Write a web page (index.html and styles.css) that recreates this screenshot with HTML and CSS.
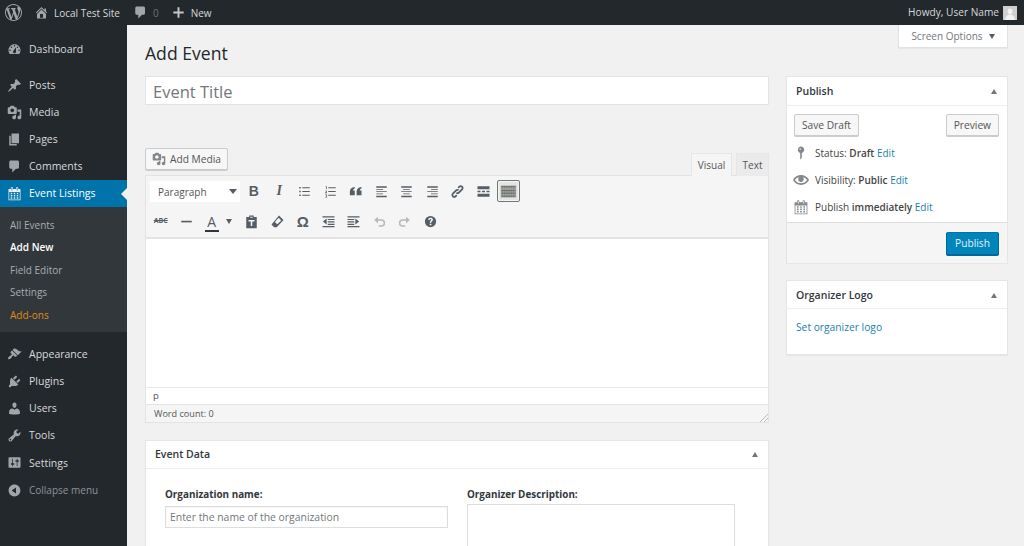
FILE: index.html
```html
<!DOCTYPE html>
<html lang="en">
<head>
<meta charset="utf-8">
<title>Add Event</title>
<link rel="stylesheet" href="styles.css">
</head>
<body>
<svg class="defs" xmlns="http://www.w3.org/2000/svg">
<symbol id="i-wp" viewBox="0 0 20 20"><path d="M20 10c0-5.51-4.49-10-10-10C4.48 0 0 4.49 0 10c0 5.52 4.48 10 10 10 5.51 0 10-4.48 10-10zM7.78 15.37L4.37 6.22c.55-.02 1.17-.08 1.17-.08.5-.06.44-1.13-.06-1.11 0 0-1.45.11-2.37.11-.18 0-.37 0-.58-.01C4.12 2.69 6.87 1.11 10 1.11c2.33 0 4.45.87 6.05 2.34-.68-.11-1.65.39-1.65 1.58 0 .74.45 1.36.9 2.1.35.61.55 1.36.55 2.46 0 1.49-1.4 5-1.4 5l-3.03-8.37c.54-.02.82-.17.82-.17.5-.05.44-1.25-.06-1.22 0 0-1.44.12-2.38.12-.87 0-2.33-.12-2.33-.12-.5-.03-.56 1.2-.06 1.22l.92.08 1.26 3.41zM17.41 10c.24-.64.74-1.87.43-4.25.7 1.29 1.05 2.71 1.05 4.25 0 3.29-1.73 6.24-4.4 7.78.97-2.59 1.94-5.2 2.92-7.78zM6.1 18.09C3.12 16.65 1.11 13.53 1.11 10c0-1.3.23-2.48.72-3.59C3.25 10.3 4.67 14.2 6.1 18.09zm4.03-6.63l2.58 6.98c-.86.29-1.76.45-2.71.45-.79 0-1.57-.11-2.29-.33.81-2.38 1.62-4.74 2.42-7.1z"/></symbol>
<symbol id="i-home" viewBox="0 0 20 20"><path d="M16 8.5l1.53 1.53-1.06 1.06L10 4.62l-6.47 6.47-1.06-1.06L10 2.5l4 4v-2h2v4zm-6-2.46l6 5.99V18H4v-5.97zM12 17v-5H8v5h4z"/></symbol>
<symbol id="i-comment" viewBox="0 0 20 20"><path d="M5 2h9c1.1 0 2 .9 2 2v7c0 1.1-.9 2-2 2h-2l-5 5v-5H5c-1.1 0-2-.9-2-2V4c0-1.1.9-2 2-2z"/></symbol>
<symbol id="i-plus" viewBox="0 0 20 20"><path d="M18 8.5v3h-6.5V18h-3v-6.5H2v-3h6.5V2h3v6.5z"/></symbol>
<symbol id="i-dash" viewBox="0 0 20 20"><path fill-rule="evenodd" d="M3.76 16h12.48c1.1-1.37 1.76-3.11 1.76-5 0-4.42-3.58-8-8-8s-8 3.58-8 8c0 1.89.66 3.63 1.76 5zM10 4c.55 0 1 .45 1 1s-.45 1-1 1-1-.45-1-1 .45-1 1-1zM6 6c.55 0 1 .45 1 1s-.45 1-1 1-1-.45-1-1 .45-1 1-1zm8 0c.55 0 1 .45 1 1s-.45 1-1 1-1-.45-1-1 .45-1 1-1zm-5.37 5.55L12 7v6c0 1.1-.9 2-2 2s-2-.9-2-2c0-.57.24-1.08.63-1.45zM4 10c.55 0 1 .45 1 1s-.45 1-1 1-1-.45-1-1 .45-1 1-1zm12 0c.55 0 1 .45 1 1s-.45 1-1 1-1-.45-1-1 .45-1 1-1z"/></symbol>
<symbol id="i-pin" viewBox="0 0 20 20"><path d="M10.44 3.02l1.82-1.82 6.36 6.35-1.83 1.82c-1.05-.68-2.48-.57-3.41.36l-.75.75c-.92.93-1.04 2.35-.35 3.41l-1.83 1.82-2.41-2.41-2.8 2.79c-.42.42-3.38 2.71-3.8 2.29s1.86-3.39 2.28-3.81l2.79-2.79L4.1 9.36l1.83-1.82c1.05.69 2.48.57 3.4-.36l.75-.75c.93-.92 1.05-2.35.36-3.41z"/></symbol>
<symbol id="i-media" viewBox="0 0 20 20"><path fill-rule="evenodd" d="M13 11V4c0-.55-.45-1-1-1h-1.67L9 1H5L3.67 3H2c-.55 0-1 .45-1 1v7c0 .55.45 1 1 1h10c.55 0 1-.45 1-1zM7 4.5c1.38 0 2.5 1.12 2.5 2.5S8.38 9.5 7 9.5 4.5 8.38 4.5 7 5.62 4.5 7 4.5zM14 6h5v10.5c0 1.38-1.12 2.5-2.5 2.5S14 17.88 14 16.5s1.12-2.5 2.5-2.5c.17 0 .34.02.5.05V9h-3V6zm-4 8.05V13h2v3.5c0 1.38-1.12 2.5-2.5 2.5S7 17.88 7 16.5 8.12 14 9.5 14c.17 0 .34.02.5.05z"/></symbol>
<symbol id="i-page" viewBox="0 0 20 20"><path d="M6 15V2h10v13H6zm-1 1h8v2H3V5h2v11z"/></symbol>
<symbol id="i-cal" viewBox="0 0 20 20"><path fill-rule="evenodd" d="M15 4h3v15H2V4h3V3c0-.41.15-.76.44-1.06.29-.29.65-.44 1.06-.44s.77.15 1.06.44c.29.3.44.65.44 1.06v1h4V3c0-.41.15-.76.44-1.06.29-.29.65-.44 1.06-.44s.77.15 1.06.44c.29.3.44.65.44 1.06v1zM6 3v2.5c0 .14.05.26.15.36.09.09.21.14.35.14s.26-.05.35-.14c.1-.1.15-.22.15-.36V3c0-.14-.05-.26-.15-.35-.09-.1-.21-.15-.35-.15s-.26.05-.35.15c-.1.09-.15.21-.15.35zm7 0v2.5c0 .14.05.26.14.36.1.09.22.14.36.14s.26-.05.36-.14c.09-.1.14-.22.14-.36V3c0-.14-.05-.26-.14-.35-.1-.1-.22-.15-.36-.15s-.26.05-.36.15c-.09.09-.14.21-.14.35zm4 15V8H3v10h14zM7 9v2H5V9h2zm2 0h2v2H9V9zm4 2V9h2v2h-2zm-6 1v2H5v-2h2zm2 0h2v2H9v-2zm4 2v-2h2v2h-2zm-6 1v2H5v-2h2zm4 2H9v-2h2v2zm4 0h-2v-2h2v2z"/></symbol>
<symbol id="i-brush" viewBox="0 0 20 20"><path d="M14.48 11.06L7.41 3.99l1.5-1.5c.5-.56 2.3-.47 3.51.32 1.21.8 1.43 1.28 2.91 2.1 1.18.64 2.45 1.26 4.45.85zm-.71.71L6.7 4.7 4.93 6.47c-.39.39-.39 1.02 0 1.41l1.06 1.06c.39.39.39 1.03 0 1.42-.6.6-1.43 1.11-2.21 1.69-.35.26-.7.53-1.01.84C1.43 13.71.96 15.12 1.75 15.91c.8.79 2.2.32 3.43-.91.31-.31.58-.66.84-1.01.58-.78 1.09-1.61 1.69-2.21.39-.39 1.03-.39 1.42 0l1.06 1.06c.39.39 1.02.39 1.41 0z"/></symbol>
<symbol id="i-plug" viewBox="0 0 20 20"><path d="M13.11 4.36L9.87 7.6 8 5.73l3.24-3.24c.35-.34 1.05-.2 1.56.32.52.51.66 1.21.31 1.55zm-8 1.77l.91-1.12 9.01 9.01-1.19.84c-.71.71-2.63 1.16-3.82 1.16H6.14L4.9 17.26c-.59.59-1.54.59-2.12 0-.59-.58-.59-1.53 0-2.12l1.24-1.24v-3.88c0-1.13.4-3.19 1.09-3.89zm7.26 3.97l3.24-3.24c.34-.35 1.04-.21 1.55.31.52.51.66 1.21.31 1.55l-3.24 3.25z"/></symbol>
<symbol id="i-users" viewBox="0 0 20 20"><path d="M10 9.25c-2.27 0-2.73-3.44-2.73-3.44C7 4.02 7.82 2 9.97 2c2.16 0 2.98 2.02 2.71 3.81 0 0-.41 3.44-2.68 3.44zm0 2.57L12.72 10c2.39 0 4.52 2.33 4.52 4.53v2.49s-3.65 1.13-7.24 1.13c-3.65 0-7.24-1.13-7.24-1.13v-2.49c0-2.25 1.94-4.48 4.47-4.48z"/></symbol>
<symbol id="i-tools" viewBox="0 0 20 20"><path fill-rule="evenodd" d="M16.68 9.77c-1.34 1.34-3.3 1.67-4.95.99l-5.41 6.52c-.99.99-2.59.99-3.58 0s-.99-2.59 0-3.57l6.52-5.42c-.68-1.65-.35-3.61.99-4.95 1.28-1.28 3.12-1.62 4.72-1.06l-2.89 2.89 2.82 2.82 2.86-2.87c.53 1.58.18 3.39-1.08 4.65zM3.81 16.21c.4.39 1.04.39 1.43 0 .4-.4.4-1.04 0-1.43-.39-.4-1.03-.4-1.43 0-.39.39-.39 1.03 0 1.43z"/></symbol>
<symbol id="i-set" viewBox="0 0 20 20"><path fill-rule="evenodd" d="M18 16V4c0-.55-.45-1-1-1H3c-.55 0-1 .45-1 1v12c0 .55.45 1 1 1h14c.55 0 1-.45 1-1zM8 11h1c.55 0 1 .45 1 1s-.45 1-1 1H8v1.5c0 .28-.22.5-.5.5s-.5-.22-.5-.5V13H6c-.55 0-1-.45-1-1s.45-1 1-1h1V5.5c0-.28.22-.5.5-.5s.5.22.5.5V11zm5-2h-1c-.55 0-1-.45-1-1s.45-1 1-1h1V5.5c0-.28.22-.5.5-.5s.5.22.5.5V7h1c.55 0 1 .45 1 1s-.45 1-1 1h-1v5.5c0 .28-.22.5-.5.5s-.5-.22-.5-.5V9z"/></symbol>
<symbol id="i-collapse" viewBox="0 0 20 20"><path fill-rule="evenodd" d="M10 2.16c4.33 0 7.84 3.51 7.84 7.84s-3.51 7.84-7.84 7.84S2.16 14.33 2.16 10 5.71 2.16 10 2.16zm2 11.72V6.12L6.18 9.97z"/></symbol>
<symbol id="i-status" viewBox="0 0 20 20"><path fill-rule="evenodd" d="M14 6c0 1.86-1.28 3.41-3 3.86V16c0 1-2 2-2 2V9.86c-1.72-.45-3-2-3-3.86 0-2.21 1.79-4 4-4s4 1.79 4 4zM8 5c0 .55.45 1 1 1s1-.45 1-1-.45-1-1-1-1 .45-1 1z"/></symbol>
<symbol id="i-eye" viewBox="0 0 20 20"><path d="M19.7 9.4C17.7 6 14 3.9 10 3.9S2.3 6 .3 9.4L0 10l.3.6c2 3.4 5.7 5.5 9.7 5.5s7.7-2.1 9.7-5.5l.3-.6-.3-.6zM10 14.1c-3.1 0-6-1.6-7.7-4.1C3.6 8 5.7 6.6 8 6.1c-.9.6-1.5 1.7-1.5 2.9 0 1.9 1.6 3.5 3.5 3.5s3.5-1.6 3.5-3.5c0-1.2-.6-2.3-1.5-2.9 2.3.5 4.4 1.9 5.7 3.9-1.7 2.5-4.6 4.1-7.7 4.1z"/></symbol>
<symbol id="m-ul" viewBox="0 0 20 20"><path d="M3 4h2v2H3zM3 9h2v2H3zM3 14h2v2H3zM7 4.4h10v1.2H7zM7 9.4h10v1.2H7zM7 14.4h10v1.2H7z"/></symbol>
<symbol id="m-ol" viewBox="0 0 20 20"><path d="M4 3h1v4H4V4H3zM3 9h2.2v1.6L4 11.4h1.4v.8H3v-1.1l1.3-.9V9.8H3zM3 14h2.4v4H3v-.7h1.5v-.9H3.4v-.7h1.1v-.9H3zM7 4.4h10v1.2H7zM7 9.4h10v1.2H7zM7 14.4h10v1.2H7z"/></symbol>
<symbol id="m-quote" viewBox="0 0 20 20"><path d="M9 4v2C7.4 6.5 6.8 7.4 6.7 8.8H9V15H2.5V10C2.5 7 4.5 4.3 9 4zM18 4v2c-1.600.5-2.200 1.400-2.300 2.800H18V15h-6.500V10c0-3 2-5.700 6.500-6z"/></symbol>
<symbol id="m-left" viewBox="0 0 20 20"><path d="M3 3h14v2H3zM3 6.500h9v1.200H3zM3 9.500h14v1.200H3zM3 12.500h9v1.200H3zM3 15.500h14v2H3z"/></symbol>
<symbol id="m-center" viewBox="0 0 20 20"><path d="M3 3h14v2H3zM5.500 6.500h9v1.200h-9zM3 9.500h14v1.200H3zM5.500 12.500h9v1.200h-9zM3 15.500h14v2H3z"/></symbol>
<symbol id="m-right" viewBox="0 0 20 20"><path d="M3 3h14v2H3zM8 6.500h9v1.200H8zM3 9.500h14v1.200H3zM8 12.500h9v1.200H8zM3 15.500h14v2H3z"/></symbol>
<symbol id="m-link" viewBox="0 0 20 20"><path fill="none" stroke="currentColor" stroke-width="2.400" d="M8.600 11.400c1 1 2.200.9 3.200 0l4.300-4.300c1-1 1-2.600 0-3.500s-2.500-1-3.500 0l-1.600 1.600M11.400 8.600c-1-1-2.200-.9-3.200 0l-4.300 4.300c-1 1-1 2.600 0 3.500s2.500 1 3.500 0l1.600-1.600"/></symbol>
<symbol id="m-more" viewBox="0 0 20 20"><path d="M2 3h16v4H2zM2 9h4v2H2zM8 9h4v2H8zM14 9h4v2h-4zM2 13h16v4H2z"/></symbol>
<symbol id="m-sink" viewBox="0 0 20 20"><path d="M1 3h18v14H1z" fill="#9b9f95"/><path d="M2 4.500h16M2 9h16M2 12h16M2 15.500h16" stroke="#40464d" stroke-width="1" stroke-dasharray="1.500 .7" fill="none"/></symbol>
<symbol id="m-hr" viewBox="0 0 20 20"><path d="M3 9h14v2.200H3z"/></symbol>
<symbol id="m-paste" viewBox="0 0 20 20"><path fill-rule="evenodd" d="M7 2h6v2h4v15H3V4h4zM8.500 3.500v1.500h3V3.500zM6 8v2h8V8zm3 2v6h2v-6z"/></symbol>
<symbol id="m-erase" viewBox="0 0 20 20"><path fill-rule="evenodd" d="M12 2l6 6-9 9.500H5.500L2 14zM11.500 5L6.500 10.500l3.200 3.200 5.300-5.200z"/></symbol>
<symbol id="m-outdent" viewBox="0 0 20 20"><path d="M2 3h16v1.500H2zM9 6.500h9V8H9zM9 9.800h9v1.400H9zM9 13h9v1.500H9zM2 16h16v1.500H2zM7.500 6v8L2.500 10z"/></symbol>
<symbol id="m-indent" viewBox="0 0 20 20"><path d="M2 3h16v1.500H2zM2 6.500h9V8H2zM2 9.800h9v1.400H2zM2 13h9v1.500H2zM2 16h16v1.500H2zM12.500 6v8l5-4z"/></symbol>
<symbol id="m-undo" viewBox="0 0 20 20"><path fill="none" stroke="currentColor" stroke-width="2" d="M6 8h6.500a3.800 3.800 0 0 1 0 8H9"/><path d="M3 8l5-4.500v9z"/></symbol>
<symbol id="m-redo" viewBox="0 0 20 20"><path fill="none" stroke="currentColor" stroke-width="2" d="M14 8H7.500a3.800 3.800 0 0 0 0 8H11"/><path d="M17 8l-5-4.500v9z"/></symbol>
<symbol id="m-help" viewBox="0 0 20 20"><path fill-rule="evenodd" d="M10 2.500a7.500 7.500 0 1 1 0 15 7.500 7.500 0 0 1 0-15zM9 13v2h2.200v-2zM7 8h2c0-.8.400-1.200 1-1.200s1 .4 1 1c0 1.100-2 1.400-2 3.800h2c0-1.700 2.200-2 2.200-4 0-1.700-1.400-2.600-3.200-2.600C8.200 5 7 6.200 7 8z"/></symbol>
</svg>

<header class="adminbar">
  <a class="ab-logo"><svg class="ab-wp"><use href="#i-wp"/></svg></a>
  <a class="ab-item ab-site"><svg class="ab-ic"><use href="#i-home"/></svg>Local Test Site</a>
  <a class="ab-item ab-comments"><svg class="ab-ic"><use href="#i-comment"/></svg><span class="ab-count">0</span></a>
  <a class="ab-item ab-new"><svg class="ab-ic"><use href="#i-plus"/></svg>New</a>
  <a class="ab-item ab-user">Howdy, User Name<span class="avatar"><svg viewBox="0 0 14 14"><path d="M7 2.500c1.500 0 2.400 1.200 2.400 2.800S8.500 8.400 7 8.400 4.600 6.900 4.600 5.300 5.500 2.500 7 2.500zM2 14c0-3 2-4.800 3.500-5.200h3C10 9.200 12 11 12 14z"/></svg></span></a>
</header>

<div class="shell">
  <nav class="sidebar">
    <ul class="menu menu-dash">
      <li class="mi"><svg class="mi-ic"><use href="#i-dash"/></svg>Dashboard</li>
    </ul>
    <ul class="menu menu-content">
      <li class="mi"><svg class="mi-ic"><use href="#i-pin"/></svg>Posts</li>
      <li class="mi"><svg class="mi-ic"><use href="#i-media"/></svg>Media</li>
      <li class="mi"><svg class="mi-ic"><use href="#i-page"/></svg>Pages</li>
      <li class="mi"><svg class="mi-ic"><use href="#i-comment"/></svg>Comments</li>
      <li class="mi mi-current"><svg class="mi-ic"><use href="#i-cal"/></svg>Event Listings</li>
    </ul>
    <ul class="submenu">
      <li>All Events</li>
      <li class="sub-current">Add New</li>
      <li>Field Editor</li>
      <li>Settings</li>
      <li class="sub-addons">Add-ons</li>
    </ul>
    <ul class="menu menu-system">
      <li class="mi"><svg class="mi-ic"><use href="#i-brush"/></svg>Appearance</li>
      <li class="mi"><svg class="mi-ic"><use href="#i-plug"/></svg>Plugins</li>
      <li class="mi"><svg class="mi-ic"><use href="#i-users"/></svg>Users</li>
      <li class="mi"><svg class="mi-ic"><use href="#i-tools"/></svg>Tools</li>
      <li class="mi"><svg class="mi-ic"><use href="#i-set"/></svg>Settings</li>
      <li class="mi mi-collapse"><svg class="mi-ic"><use href="#i-collapse"/></svg>Collapse menu</li>
    </ul>
  </nav>

  <main class="main">
    <div class="head">
      <h1>Add Event</h1>
      <div class="screen-options">Screen Options<span class="caret"></span></div>
    </div>
    <div class="columns">
      <div class="col-main">
        <div class="title-input">Event Title</div>
        <div class="editor-tools">
          <button class="btn btn-media"><svg class="btn-ic"><use href="#i-media"/></svg>Add Media</button>
          <div class="tabs"><span class="tab tab-on">Visual</span><span class="tab tab-text">Text</span></div>
        </div>
        <div class="editor">
          <div class="toolbar">
            <div class="tb-row tb-row1">
              <div class="format">Paragraph<span class="caret"></span></div>
              <span class="tb tb-b">B</span>
              <span class="tb tb-i">I</span>
              <span class="tb"><svg><use href="#m-ul"/></svg></span>
              <span class="tb"><svg><use href="#m-ol"/></svg></span>
              <span class="tb"><svg><use href="#m-quote"/></svg></span>
              <span class="tb"><svg><use href="#m-left"/></svg></span>
              <span class="tb"><svg><use href="#m-center"/></svg></span>
              <span class="tb"><svg><use href="#m-right"/></svg></span>
              <span class="tb"><svg><use href="#m-link"/></svg></span>
              <span class="tb"><svg><use href="#m-more"/></svg></span>
              <span class="tb tb-on"><svg><use href="#m-sink"/></svg></span>
            </div>
            <div class="tb-row tb-row2">
              <span class="tb tb-abc">ABC</span>
              <span class="tb"><svg><use href="#m-hr"/></svg></span>
              <span class="tb tb-a">A</span>
              <span class="tb tb-caret"><span class="caret"></span></span>
              <span class="tb"><svg><use href="#m-paste"/></svg></span>
              <span class="tb"><svg><use href="#m-erase"/></svg></span>
              <span class="tb tb-omega">Ω</span>
              <span class="tb"><svg><use href="#m-outdent"/></svg></span>
              <span class="tb"><svg><use href="#m-indent"/></svg></span>
              <span class="tb tb-off"><svg><use href="#m-undo"/></svg></span>
              <span class="tb tb-off"><svg><use href="#m-redo"/></svg></span>
              <span class="tb"><svg><use href="#m-help"/></svg></span>
            </div>
          </div>
          <div class="editor-area"></div>
          <div class="path">p</div>
          <div class="wordcount">Word count: 0<span class="grip"></span></div>
        </div>
        <section class="box box-data">
          <div class="box-head">Event Data<span class="arrow"></span></div>
          <div class="data-grid">
            <div class="field">
              <label class="lbl">Organization name:</label>
              <div class="input">Enter the name of the organization</div>
            </div>
            <div class="field field-desc">
              <label class="lbl">Organizer Description:</label>
              <div class="textarea"></div>
            </div>
          </div>
        </section>
      </div>
      <aside class="col-side">
        <section class="box box-publish">
          <div class="box-head">Publish<span class="arrow"></span></div>
          <div class="pub-actions">
            <button class="btn">Save Draft</button>
            <button class="btn">Preview</button>
          </div>
          <div class="pub-row"><svg class="pub-ic"><use href="#i-status"/></svg>Status:&nbsp;<b>Draft</b>&nbsp;<a>Edit</a></div>
          <div class="pub-row"><svg class="pub-ic"><use href="#i-eye"/></svg>Visibility:&nbsp;<b>Public</b>&nbsp;<a>Edit</a></div>
          <div class="pub-row"><svg class="pub-ic"><use href="#i-cal"/></svg>Publish&nbsp;<b>immediately</b>&nbsp;<a>Edit</a></div>
          <div class="pub-foot"><button class="btn btn-primary">Publish</button></div>
        </section>
        <section class="box box-logo">
          <div class="box-head">Organizer Logo<span class="arrow"></span></div>
          <div class="logo-body"><a>Set organizer logo</a></div>
        </section>
      </aside>
    </div>
  </main>
</div>
</body>
</html>
```
FILE: styles.css
```css
* { box-sizing: border-box; }
html, body { margin: 0; height: 546px; overflow: hidden; }
body { background: #f1f1f1; color: #444; font: 10.5px/1.4 "Open Sans", sans-serif; }
ul { list-style: none; margin: 0; padding: 0; }
a { color: #1a7fb0; }
.defs { display: none; }

.adminbar { height: 25px; background: #23282d; color: #ddd; display: flex; align-items: center; font-size: 10px; }
.adminbar svg { fill: #a0a5aa; }
.ab-logo { width: 29px; padding-left: 5px; display: flex; }
.ab-wp { width: 17px; height: 17px; }
.ab-item { display: flex; align-items: center; color: #d6d8d9; white-space: nowrap; }
.ab-ic { width: 15px; height: 15px; margin-right: 5px; }
.ab-site { margin-left: 5px; }
.ab-comments { margin-left: 13px; }
.ab-count { color: #6d7276; }
.ab-new { margin-left: 13px; }
.ab-new svg { fill: #c4c6c8; width: 13px; height: 13px; margin-right: 6px; }
.ab-user { margin-left: auto; margin-right: 7px; font-size: 10.15px; }
.avatar { width: 14px; height: 14px; margin-left: 4px; background: #cfcfcf; display: block; }
.adminbar .avatar svg { fill: #f2f2f2; display: block; width: 14px; height: 14px; }

.shell { display: flex; height: 521px; }
.sidebar { width: 127px; background: #23282d; color: #d9dadb; flex: none; }
.mi { height: 27px; padding-bottom: 1px; display: flex; align-items: center; position: relative; white-space: nowrap; }
.mi-ic { width: 15px; height: 15px; margin: 0 7px 0 7px; fill: #a0a5aa; flex: none; }
.menu-dash { padding-top: 11px; }
.menu-content { margin-top: 9px; }
.mi-current { background: #0073aa; color: #fff; }
.mi-current .mi-ic { fill: #e8f1f6; }
.mi-current::after { content: ""; position: absolute; right: 0; top: 8px; border: 6px solid transparent; border-right-color: #f1f1f1; border-left-width: 0; }
.submenu { background: #32373c; color: #a9adb0; height: 125px; padding-top: 7px; font-size: 10px; }
.submenu li { height: 22.4px; line-height: 22px; padding-left: 10px; }
.sub-current { color: #fff; font-weight: 600; }
.sub-addons { color: #e08a12; }
.menu-system { padding-top: 9px; }
.menu-system .mi { height: 27.2px; }
.mi-collapse { color: #8f9498; font-size: 10px; }

.main { flex: 1; padding: 0 16px 0 18px; min-width: 0; }
.head { height: 51px; display: flex; justify-content: space-between; align-items: flex-start; }
h1 { margin: 15px 0 0; font-size: 17.6px; line-height: 26px; font-weight: 400; color: #23282d; }
.screen-options { width: 110px; height: 23px; background: #fff; border: 1px solid #e1e1e1; border-top: 0; color: #72777c; font-size: 10px; display: flex; align-items: center; justify-content: center; box-shadow: 0 1px 1px rgba(0,0,0,.04); }
.caret { display: inline-block; width: 0; height: 0; border: 3.5px solid transparent; border-top: 5px solid #555d66; border-bottom: 0; margin-left: 6px; }

.columns { display: grid; grid-template-columns: 624px 222px; column-gap: 17px; align-items: start; }
.title-input { height: 29px; background: #fff; border: 1px solid #e3e3e3; padding-left: 7px; font-size: 16.5px; line-height: 29px; color: #72777c; }
.editor-tools { margin-top: 43px; height: 27px; display: flex; justify-content: space-between; align-items: flex-start; }
.btn { font: inherit; font-size: 10.2px; height: 22px; padding: 0 7px; background: #f7f7f7; border: 1px solid #ccc; border-radius: 2px; color: #555; box-shadow: 0 1px 0 #ccc; display: inline-flex; align-items: center; white-space: nowrap; }
.btn-media { width: 83px; padding-left: 6px; }
.btn-ic { height: 14px; width: 14px; fill: #82878c; margin-right: 4px; flex: none; }
.tabs { margin-top: 5px; display: flex; gap: 4px; }
.tab { height: 23px; width: 41px; text-align: center; line-height: 23px; font-size: 10px; background: #ebebeb; color: #555; border: 1px solid #e6e6e6; border-bottom: 0; position: relative; }
.tab-on { background: #f5f5f5; }
.tab-text { width: 33px; }

.editor { height: 248px; border: 1px solid #e3e3e3; display: flex; flex-direction: column; background: #fff; }
.toolbar { height: 63px; background: #f5f5f5; border-bottom: 2px solid #e3e3e3; flex: none; padding: 4px 0 0 2px; }
.tb-row { display: flex; align-items: center; height: 22px; color: #555d66; }
.tb-row2 { margin-top: 8px; }
.format { width: 90px; height: 21px; margin: 0 1px 0 2px; background: #fff; padding: 1px 3px 0 8px; display: flex; align-items: center; justify-content: space-between; color: #555; font-size: 10px; flex: none; }
.format .caret { border-width: 5px 4px 0; }
.tb { width: 25.5px; height: 22px; display: flex; align-items: center; justify-content: center; flex: none; }
.tb svg { width: 15px; height: 15px; fill: #555d66; color: #555d66; }
.tb-b { font: 700 14px "Liberation Sans", sans-serif; }
.tb-i { font: italic 700 14px "Liberation Serif", serif; }
.tb-on { width: 23px; margin-left: 1px; border: 1px solid #72777c; border-radius: 2px; background: #e4e4e4; box-shadow: inset 0 0 0 1px #f5f5f5; }
.tb-on svg { width: 17px; height: 17px; }
.tb-abc { font-size: 7px; font-weight: 700; text-decoration: line-through; }
.tb-a { font-size: 14px; line-height: 17px; height: 17px; position: relative; }
.tb-a::after { content: ""; position: absolute; left: 6px; right: 6px; bottom: -2px; height: 2px; background: #32373c; }
.tb-caret { width: 14.5px; justify-content: flex-start; padding-left: 1px; }
.tb-caret .caret { margin-left: 0; }
.tb-omega { font: 700 15px "Liberation Sans", sans-serif; }
.tb-off svg { fill: #b4b9be; color: #b4b9be; }
.editor-area { flex: 1; background: #fff; }
.path { height: 17px; border-top: 1px solid #e8e8e8; padding-left: 7px; font-size: 9.5px; line-height: 15px; color: #555; flex: none; }
.wordcount { height: 18px; background: #f5f5f5; border-top: 1px solid #e3e3e3; padding-left: 8px; font-size: 9.1px; line-height: 18px; color: #555; flex: none; position: relative; }
.grip { position: absolute; right: 0; bottom: 0; width: 10px; height: 10px; background: repeating-linear-gradient(135deg, transparent 0 2px, #b9b9b9 2px 3px); clip-path: polygon(100% 0, 100% 100%, 0 100%); }

.box { background: #fff; border: 1px solid #e5e5e5; box-shadow: 0 1px 1px rgba(0,0,0,.04); }
.box-head { height: 28px; padding: 0 9px; border-bottom: 1px solid #eee; display: flex; align-items: center; justify-content: space-between; font-size: 10.5px; font-weight: 600; color: #32373c; }
.arrow { width: 0; height: 0; border: 3.5px solid transparent; border-bottom: 5px solid #72777c; border-top: 0; margin-right: 1px; }
.box-data { margin-top: 17px; height: 120px; border-bottom: 0; }
.data-grid { display: flex; padding: 18px 0 0 19px; }
.field { width: 283px; }
.field-desc { width: 268px; margin-left: 19px; }
.lbl { display: block; font-weight: 700; font-size: 9.9px; line-height: 15px; color: #32373c; }
.input { margin-top: 4px; height: 22px; border: 1px solid #ddd; padding-left: 4px; font-size: 10.4px; line-height: 20px; color: #72777c; box-shadow: inset 0 1px 2px rgba(0,0,0,.05); }
.textarea { margin-top: 2px; height: 60px; border: 1px solid #ddd; }

.box-publish { height: 187px; position: relative; }
.box-publish .box-head { height: 29px; }
.pub-actions { display: flex; justify-content: space-between; padding: 8px 8px 0 7px; }
.pub-row { height: 27px; display: flex; align-items: center; padding-left: 6px; font-size: 10px; white-space: nowrap; }
.pub-actions + .pub-row { margin-top: 3px; }
.pub-row b { font-weight: 600; color: #444; }
.pub-ic { width: 16px; height: 16px; fill: #82878c; margin-right: 6px; flex: none; }
.pub-foot { margin-top: 2px; height: 41px; background: #f5f5f5; border-top: 1px solid #ddd; display: flex; justify-content: flex-end; align-items: flex-start; padding: 9px 8px 0 0; }
.btn-primary { height: 23px; background: #0085ba; border-color: #0073aa #006799 #006799; color: #e6f2f8; box-shadow: 0 1px 0 #006799; padding: 0 8px; width: 53px; justify-content: center; }
.box-logo { margin-top: 17px; height: 75px; }
.box-logo .box-head { padding-top: 2px; }
.logo-body { padding: 11px 9px 0; font-size: 10.25px; }
```
